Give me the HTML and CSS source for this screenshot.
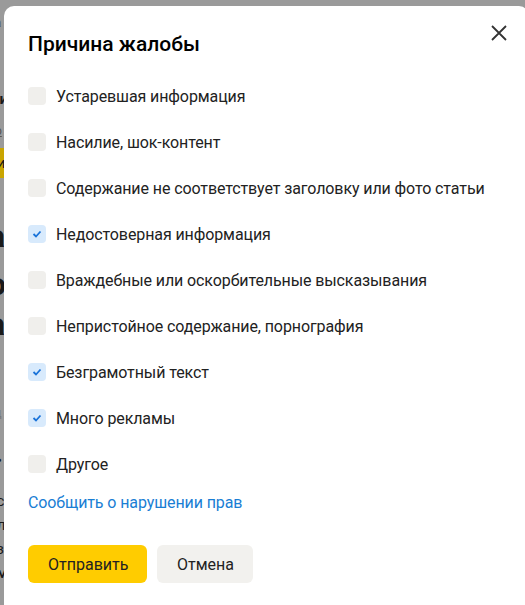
FILE: index.html
```html
<!DOCTYPE html>
<html>

    <head>
        <title>Причина жалобы</title>
        <meta name="viewport" content="width=device-width, initial-scale=1.0">
        <link rel="stylesheet" href="styles.css">
    </head>

    <body>
        <div class="page">
            <div class="page-line small" style="margin-top: 14px">ва</div>
            <div class="page-line bold" style="margin-top: 58px">ми</div>
            <div class="page-line small under" style="margin-top: 14px">ло</div>
            <div class="page-line yellow" style="margin-top: 8px">ли</div>
            <div class="page-line huge" style="margin-top: 38px">ав</div>
            <div class="page-line huge" style="margin-top: 8px">ос</div>
            <div class="page-line huge" style="margin-top: 0px">ат</div>
            <div class="page-line small grey" style="margin-top: 60px">ед</div>
            <div class="page-line bold" style="margin-top: 30px">о•</div>
            <div class="page-line" style="margin-top: 22px">ос</div>
            <div class="page-line" style="margin-top: 6px">ил</div>
            <div class="page-line" style="margin-top: 6px">аз</div>
            <div class="page-line bold" style="margin-top: 6px">ом</div>
        </div>

        <div class="modal">
            <button class="close" type="button" aria-label="Закрыть">
                <svg width="16" height="16" viewBox="0 0 16 16">
                    <path d="M1 1L15 15M15 1L1 15" stroke="#333" stroke-width="1.8" fill="none"/>
                </svg>
            </button>

            <h1>Причина жалобы</h1>

            <form class="reasons">
                <label class="reason"><input type="checkbox"><span class="box"></span>Устаревшая информация</label>
                <label class="reason"><input type="checkbox"><span class="box"></span>Насилие, шок-контент</label>
                <label class="reason"><input type="checkbox"><span class="box"></span>Содержание не соответствует заголовку или фото статьи</label>
                <label class="reason"><input type="checkbox" checked><span class="box"></span>Недостоверная информация</label>
                <label class="reason"><input type="checkbox"><span class="box"></span>Враждебные или оскорбительные высказывания</label>
                <label class="reason"><input type="checkbox"><span class="box"></span>Непристойное содержание, порнография</label>
                <label class="reason"><input type="checkbox" checked><span class="box"></span>Безграмотный текст</label>
                <label class="reason"><input type="checkbox" checked><span class="box"></span>Много рекламы</label>
                <label class="reason"><input type="checkbox"><span class="box"></span>Другое</label>
            </form>

            <a class="rights" href="#">Сообщить о нарушении прав</a>

            <div class="actions">
                <button class="btn btn-send" type="button">Отправить</button>
                <button class="btn btn-cancel" type="button">Отмена</button>
            </div>
        </div>
    </body>

</html>
```

FILE: styles.css
```css
body {
    margin: 0;
    height: 605px;
    overflow: hidden;
    background: #9a9a9a;
    font-family: Roboto, "Liberation Sans", sans-serif;
    color: #222;
}

.page {
    margin-left: -12px;
    color: #1a1a1a;
}

.page-line {
    font-size: 15px;
    line-height: 18px;
}

.page-line.small {
    font-size: 12px;
    color: #555;
}

.page-line.grey {
    color: #777;
}

.page-line.bold {
    font-weight: 700;
}

.page-line.under {
    text-decoration: underline;
}

.page-line.yellow {
    background: #c9a500;
    line-height: 30px;
}

.page-line.huge {
    font-size: 32px;
    line-height: 40px;
    font-weight: 700;
}

/* dialog */
.modal {
    position: absolute;
    top: 6px;
    left: 4px;
    right: -4px;
    bottom: -20px;
    background: #fff;
    border-radius: 10px;
    padding: 24px 24px 0;
}

.close {
    position: absolute;
    top: 14px;
    right: 17px;
    width: 26px;
    height: 26px;
    padding: 5px;
    border: 0;
    background: none;
}

h1 {
    margin: 0 0 28px;
    font-size: 21px;
    line-height: 28px;
    font-weight: 500;
    color: #000;
}

.reasons {
    display: flex;
    flex-direction: column;
}

.reason {
    display: flex;
    align-items: center;
    gap: 10px;
    height: 46px;
    margin-top: -13px;
    margin-bottom: 13px;
    font-size: 16px;
    letter-spacing: -0.1px;
    color: #222;
}

.reason input {
    display: none;
}

.box {
    width: 18px;
    height: 18px;
    border-radius: 4px;
    background: #f0efec;
    flex-shrink: 0;
}

.reason input:checked + .box {
    background: #d8eafc url("data:image/svg+xml,%3Csvg xmlns='http://www.w3.org/2000/svg' width='18' height='18' viewBox='0 0 18 18'%3E%3Cpath d='M5.5 9l2.5 2.5 4.5-5' stroke='%231a73d9' stroke-width='1.8' fill='none'/%3E%3C/svg%3E") center no-repeat;
}

.rights {
    display: block;
    margin-top: -7px;
    font-size: 16px;
    line-height: 20px;
    letter-spacing: -0.1px;
    color: #1a7ed4;
    text-decoration: none;
}

.actions {
    display: flex;
    gap: 10px;
    margin-top: 32px;
}

.btn {
    height: 38px;
    padding: 0 20px;
    border: 0;
    border-radius: 6px;
    font-family: inherit;
    font-size: 16px;
    color: #222;
}

.btn-send {
    width: 119px;
    background: #fc0;
}

.btn-cancel {
    width: 96px;
    background: #f2f1ee;
}
```
